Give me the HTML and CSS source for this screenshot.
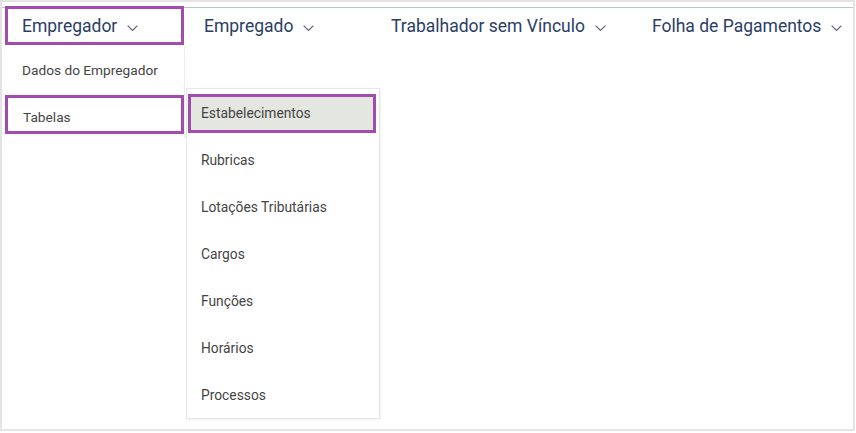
FILE: index.html
```html
<!DOCTYPE html>
<html lang="pt">
<head>
<meta charset="utf-8">
<link rel="stylesheet" href="styles.css">
</head>
<body>
<div class="frame">
  <nav class="nav">
    <div class="nav-item active w1">Empregador <svg class="chev" viewBox="0 0 11 6"><polyline points="0.6,0.6 5.5,5.4 10.4,0.6"/></svg></div>
    <div class="nav-item w2">Empregado <svg class="chev" viewBox="0 0 11 6"><polyline points="0.6,0.6 5.5,5.4 10.4,0.6"/></svg></div>
    <div class="nav-item w3">Trabalhador sem Vínculo <svg class="chev" viewBox="0 0 11 6"><polyline points="0.6,0.6 5.5,5.4 10.4,0.6"/></svg></div>
    <div class="nav-item">Folha de Pagamentos <svg class="chev" viewBox="0 0 11 6"><polyline points="0.6,0.6 5.5,5.4 10.4,0.6"/></svg></div>
  </nav>
  <div class="menu">
    <div class="menu-item">Dados do Empregador</div>
    <div class="menu-item selected">Tabelas</div>
  </div>
  <div class="submenu">
    <div class="sub-item selected">Estabelecimentos</div>
    <div class="sub-item">Rubricas</div>
    <div class="sub-item">Lotações Tributárias</div>
    <div class="sub-item">Cargos</div>
    <div class="sub-item">Funções</div>
    <div class="sub-item">Horários</div>
    <div class="sub-item">Processos</div>
  </div>
</div>
</body>
</html>
```

FILE: styles.css
```css
* { box-sizing: border-box; }
html, body { margin: 0; padding: 0; background: #fff; }
body { font-family: Roboto, "Noto Sans", sans-serif; }

.frame {
  position: relative;
  width: 855px;
  height: 431px;
  border: 2px solid #e4e4e4;
  padding-top: 5px;
}

.nav {
  display: flex;
  height: 38px;
  border-top: 1px solid #b9cdbf;
  color: #2a3e66;
  font-size: 17.5px;
}

.nav-item {
  display: flex;
  align-items: center;
  height: 36px;
  white-space: nowrap;
}
.nav-item.w2 { padding-left: 20px; width: 207px; }
.nav-item.w3 { width: 261px; }

.nav-item.active {
  margin-top: -2px;
  margin-left: 3px;
  width: 179px;
  height: 39px;
  border: 3px solid #a24cb0;
  padding-left: 14px;
}

.chev {
  width: 11px;
  height: 6px;
  margin-left: 10px;
  margin-top: 4px;
  fill: none;
  stroke: #5b6478;
  stroke-width: 1.2;
}

.menu {
  position: absolute;
  left: 0;
  top: 44px;
  width: 183px;
  height: 92px;
  background: #fff;
  border-right: 1px solid #ececec;
  font-size: 13.7px;
  color: #444;
}
.menu-item {
  height: 48px;
  display: flex;
  align-items: center;
  padding-left: 20px;
}
.menu-item.selected {
  margin-top: 1px;
  margin-left: 3px;
  width: 179px;
  height: 39px;
  border: 3px solid #a24cb0;
  padding-left: 15px;
  padding-top: 4px;
}

.submenu {
  position: absolute;
  left: 184px;
  top: 86px;
  width: 194px;
  height: 331px;
  background: #fff;
  border: 1px solid #e6e6e6;
  box-shadow: 1px 1px 2px rgba(0,0,0,0.06);
  font-size: 13.8px;
  color: #444;
}
.sub-item {
  height: 47px;
  display: flex;
  align-items: center;
  padding-left: 14px;
}
.sub-item.selected {
  height: 39px;
  margin: 5px 3px 3px 1px;
  background: #e4e6e0;
  border: 3px solid #a24cb0;
  padding-left: 10px;
  padding-bottom: 2px;
}
```
